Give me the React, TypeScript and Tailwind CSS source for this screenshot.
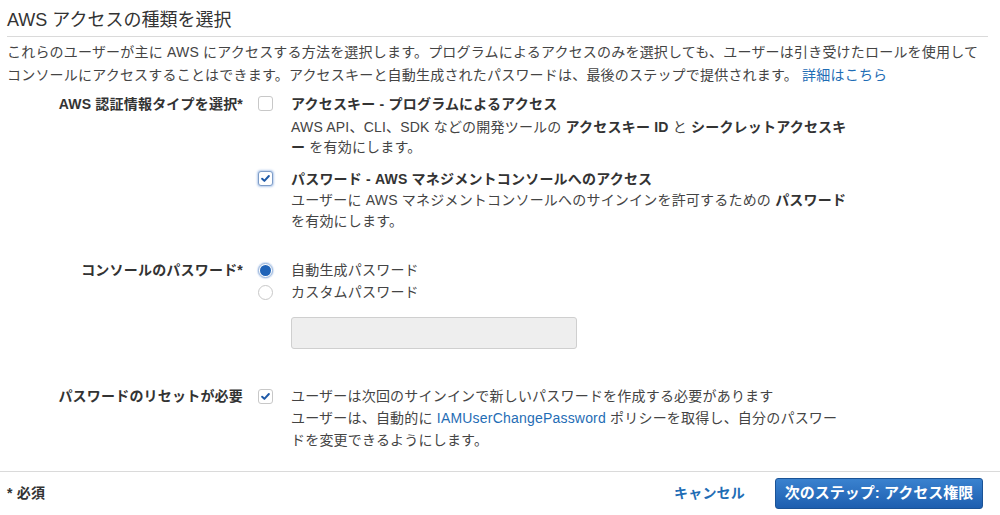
import React from "react";

function CheckBox({ checked, focus }: { checked: boolean; focus?: boolean }) {
  return (
    <span
      className={`flex h-[15px] w-[15px] shrink-0 items-center justify-center rounded-[3px] border bg-white ${
        focus ? "border-[#7d9cc7] shadow-[0_0_2px_1px_rgba(90,140,210,0.45)]" : "border-[#c8c8c8]"
      }`}
    >
      {checked && (
        <svg viewBox="0 0 15 15" className="h-[15px] w-[15px]">
          <path d="M3.6 7.8 L6.2 10.2 L11.4 4.6" fill="none" stroke="#1f5aa8" strokeWidth="2.3" strokeLinecap="round" strokeLinejoin="round" />
        </svg>
      )}
    </span>
  );
}

function Radio({ checked }: { checked: boolean }) {
  return checked ? (
    <span className="flex h-[15px] w-[15px] shrink-0 items-center justify-center rounded-full border border-[#9ab6dc] bg-white shadow-[0_0_1px_1px_rgba(120,160,220,0.35)]">
      <span className="block h-[11px] w-[11px] rounded-full bg-[#1f63b8]" />
    </span>
  ) : (
    <span className="block h-[15px] w-[15px] shrink-0 rounded-full border border-[#c8c8c8] bg-white" />
  );
}

export default function App() {
  return (
    <div className="flex h-[515px] w-[1000px] flex-col overflow-hidden bg-white font-['Liberation_Sans','Noto_Sans_CJK_JP',sans-serif] text-[#333] tracking-[0.2px]">
      {/* header */}
      <div className="pl-[7px] pr-[12px] pt-[8px]">
        <h2 className="border-b border-[#dadada] pb-[4px] text-[18px] leading-[24px] tracking-normal text-[#333]">
          AWS アクセスの種類を選択
        </h2>
        <p className="mt-[4px] whitespace-nowrap text-[14px] leading-[23px] text-[#444]">
          これらのユーザーが主に AWS にアクセスする方法を選択します。プログラムによるアクセスのみを選択しても、ユーザーは引き受けたロールを使用して
          <br />
          コンソールにアクセスすることはできます。アクセスキーと自動生成されたパスワードは、最後のステップで提供されます。{" "}
          <a className="text-[#1f6db5]">詳細はこちら</a>
        </p>
      </div>

      {/* row 1 */}
      <div className="mt-[7px] flex">
        <div className="w-[243px] shrink-0 text-right text-[14px] font-bold leading-[20px]">AWS 認証情報タイプを選択*</div>
        <div className="ml-[15px] flex flex-col">
          <div className="flex items-start">
            <span className="mt-[2px] flex">
              <CheckBox checked={false} />
            </span>
            <div className="ml-[18px] whitespace-nowrap text-[14px]">
              <div className="font-bold leading-[20px]">アクセスキー - プログラムによるアクセス</div>
              <div className="mt-[3px] leading-[20px] text-[#444]">
                AWS API、CLI、SDK などの開発ツールの <b className="text-[#333]">アクセスキー ID</b> と{" "}
                <b className="text-[#333]">シークレットアクセスキ</b>
                <br />
                <b className="text-[#333]">ー</b> を有効にします。
              </div>
            </div>
          </div>
          <div className="mt-[12px] flex items-start">
            <span className="mt-[2px] flex">
              <CheckBox checked focus />
            </span>
            <div className="ml-[18px] whitespace-nowrap text-[14px]">
              <div className="font-bold leading-[20px]">パスワード - AWS マネジメントコンソールへのアクセス</div>
              <div className="mt-[1px] leading-[20.5px] text-[#444]">
                ユーザーに AWS マネジメントコンソールへのサインインを許可するための <b className="text-[#333]">パスワード</b>
                <br />
                を有効にします。
              </div>
            </div>
          </div>
        </div>
      </div>

      {/* row 2 */}
      <div className="mt-[28px] flex">
        <div className="w-[243px] shrink-0 text-right text-[14px] font-bold leading-[22px]">コンソールのパスワード*</div>
        <div className="ml-[15px] flex flex-col text-[14px] leading-[22px] text-[#444]">
          <div className="flex h-[22px] items-start">
            <span className="mt-[4px] flex">
              <Radio checked />
            </span>
            <span className="ml-[18px]">自動生成パスワード</span>
          </div>
          <div className="flex h-[22px] items-start">
            <span className="mt-[4px] flex">
              <Radio checked={false} />
            </span>
            <span className="ml-[18px]">カスタムパスワード</span>
          </div>
          <div className="ml-[33px] mt-[14px] h-[32px] w-[286px] rounded-[3px] border border-[#cfcfcf] bg-[#eeeeee]" />
        </div>
      </div>

      {/* row 3 */}
      <div className="mt-[36px] flex">
        <div className="w-[243px] shrink-0 text-right text-[14px] font-bold leading-[22px]">パスワードのリセットが必要</div>
        <div className="ml-[15px] flex items-start">
          <span className="mt-[4px] flex">
            <CheckBox checked />
          </span>
          <div className="ml-[18px] whitespace-nowrap text-[14px] leading-[22px] text-[#444]">
            ユーザーは次回のサインインで新しいパスワードを作成する必要があります
            <br />
            ユーザーは、自動的に <a className="text-[#1f6db5]">IAMUserChangePassword</a> ポリシーを取得し、自分のパスワー
            <br />
            ドを変更できるようにします。
          </div>
        </div>
      </div>

      {/* footer */}
      <div className="mt-[20px] flex h-[44px] items-center border-t border-[#dadada] pl-[7px] pr-[17px]">
        <span className="text-[14px] font-bold">* 必須</span>
        <span className="ml-auto text-[14px] font-bold text-[#1f6db5]">キャンセル</span>
        <button className="ml-[30px] h-[31px] w-[208px] rounded-[3px] border border-[#1b5396] bg-gradient-to-b from-[#3a82cf] to-[#1d5eaf] text-[15px] font-bold text-white tracking-normal">
          次のステップ: アクセス権限
        </button>
      </div>
    </div>
  );
}
